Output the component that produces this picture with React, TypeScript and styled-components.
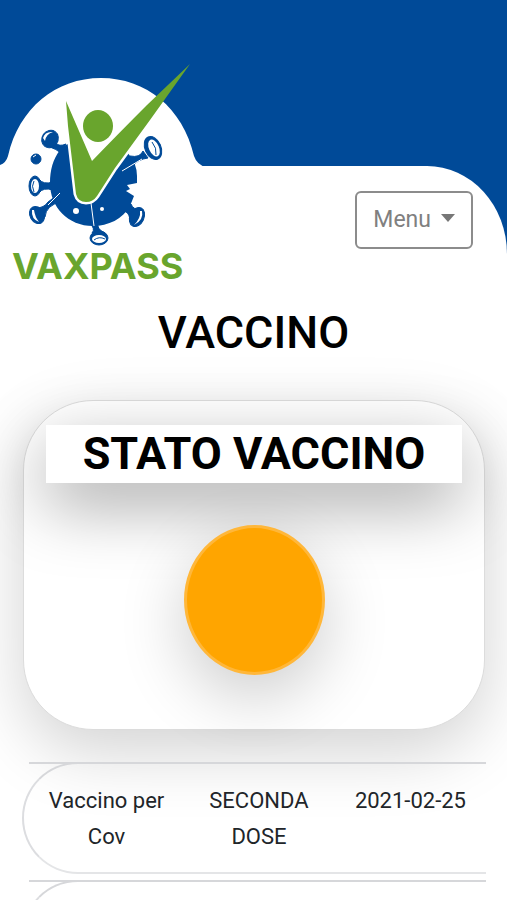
import React from "react";
import styled, { createGlobalStyle } from "styled-components";

const BLUE = "#004a98";
const GREEN = "#69a52d";

const GlobalStyle = createGlobalStyle`
  *, *::before, *::after { box-sizing: border-box; }
  body {
    margin: 0;
    background: #fff;
    color: #212529;
    font-family: Roboto, "Liberation Sans", sans-serif;
  }
`;

const Page = styled.div`
  overflow-x: hidden;
  background: #fff;
`;

const Banner = styled.div`
  padding-top: 166px;
  background: ${BLUE};
`;

const TopBar = styled.header`
  display: flex;
  justify-content: space-between;
  align-items: flex-start;
  height: 136px;
  padding-right: 34px;
  background: #fff;
  border-top-right-radius: 80px 88px;
`;

const LogoLink = styled.a`
  display: flex;
  flex-direction: column;
  width: 206px;
  margin-top: -116px;
  text-decoration: none;
`;

const Wordmark = styled.span`
  padding-left: 12px;
  color: ${GREEN};
  font: 700 36px/36px Inter, "Open Sans", sans-serif;
`;

const MenuButton = styled.button`
  display: flex;
  align-items: center;
  gap: 10px;
  height: 58px;
  margin-top: 25px;
  padding: 0 16px;
  border: 2px solid #8c8c8c;
  border-radius: 6px;
  background: transparent;
  color: #808080;
  font: 400 23px/36px Roboto, sans-serif;
`;

const Caret = styled.span`
  margin-bottom: 4px;
  border: 7px solid transparent;
  border-top: 8px solid #777;
  border-bottom: 0;
`;

const Title = styled.h1`
  margin: 0;
  padding-top: 3px;
  color: #000;
  font-size: 45px;
  font-weight: 500;
  line-height: 56px;
  text-align: center;
`;

const Card = styled.section`
  display: flex;
  flex-direction: column;
  align-items: center;
  gap: 42px;
  margin: 39px 22px 0 23px;
  padding: 24px 22px 54px;
  border: 1px solid #dcdcdc;
  border-radius: 70px;
  background: #fff;
  box-shadow: 0 22px 67px rgba(0, 0, 0, 0.175);
`;

const CardTitle = styled.h2`
  align-self: stretch;
  margin: 0;
  background: #fff;
  color: #000;
  font-size: 45px;
  font-weight: 700;
  line-height: 58px;
  text-align: center;
  white-space: nowrap;
  box-shadow: 0 22px 67px rgba(0, 0, 0, 0.35);
`;

const StatusLight = styled.div`
  width: 141px;
  height: 150px;
  border: 3px solid #ffb73a;
  border-radius: 50%;
  background: #ffa500;
  box-shadow: 0 22px 67px rgba(0, 0, 0, 0.2);
`;

const Doses = styled.table`
  width: calc(100% - 43px);
  margin: 26px 21px 0 22px;
  border-spacing: 0 6px;
  table-layout: fixed;
  font-size: 22px;
  line-height: 36px;
  text-align: center;
`;

const Col = styled.col<{ $share: number }>`
  width: ${(p) => p.$share}%;
`;

const Cell = styled.td`
  position: relative;
  height: 112px;
  padding: 19px 16px 17px 12px;
  border-top: 2px solid #d6d7da;
  border-bottom: 2px solid #e4e5e7;
  vertical-align: top;

  &:first-child {
    padding-left: 16px;
    border-left: 2px solid #dcdde0;
    border-radius: 60px 0 0 60px;
  }

  &:first-child::before {
    content: "";
    position: absolute;
    top: -2px;
    left: 5px;
    right: 0;
    height: 2px;
    background: #d6d7da;
  }

  &:last-child {
    padding-left: 6px;
    padding-right: 4px;
  }
`;

const Logo = () => (
  <svg width="206" height="198" viewBox="0 50 206 198" aria-hidden="true">
    <path
      d="M0 248V165Q6 163 8 156C19 108 56 78 101 78S183 108 194 156Q197 165 206 167V248Z"
      fill="#fff"
    />
    <g fill={BLUE} stroke={BLUE}>
      <path
        stroke="none"
        d="M60 150L64 146L68 144C85 134 112 137 127 152Q137 163 137 176L137 183L127 185L130 189L126 191L134 196L130 206C123 219 108 226 93 226C68 226 50 207 50 183C50 170 53 159 60 150Z"
      />
      <path d="M56 143Q59 147 66 144L61 153Q56 149 50 147Z" />
      <path d="M143 151Q140 158 130 156L124 164L130 168Q138 159 148 158Z" />
      <path d="M39 179Q43 185 53 182V190Q43 187 39 193Z" />
      <path d="M36 208Q44 208 48 202L56 196L61 202Q46 205 45 217Z" />
      <path d="M89 222H98Q96 229 105 233H92Q96 229 89 222Z" />
      <path d="M123 212Q128 210 130 219L142 210Q133 210 131 204Z" />
      <ellipse cx="50" cy="139" rx="8" ry="9" transform="rotate(35 50 139)" />
      <ellipse cx="153" cy="148" rx="8" ry="12" transform="rotate(-24 153 148)" />
      <ellipse cx="35" cy="186" rx="6" ry="10" />
      <ellipse cx="37" cy="215" rx="7" ry="9" transform="rotate(-30 37 215)" />
      <ellipse cx="99" cy="238" rx="9" ry="7" />
      <ellipse cx="137" cy="217" rx="7" ry="10" transform="rotate(25 137 217)" />
      <circle cx="36" cy="159" r="5" />
    </g>
    <g fill="#fff">
      <ellipse cx="154" cy="148" rx="5" ry="9" transform="rotate(-24 154 148)" />
      <ellipse cx="35" cy="186" rx="4" ry="7" />
      <ellipse cx="99" cy="239" rx="7" ry="4" />
      <circle cx="76" cy="211" r="3" />
      <circle cx="102" cy="209" r="2" />
      <path d="M43 138Q45 131 53 132Q46 134 45 141Z" />
      <path d="M32 210Q31 219 39 222Q35 217 34 210Z" />
      <path d="M142 211Q144 220 134 225Q141 218 140 211Z" />
    </g>
    <g fill="none" stroke="#fff" strokeWidth="1">
      <path d="M122 171L142 159M60 193L48 205M91 203L94 226M33 157L36 155" />
    </g>
    <g fill="none" stroke={BLUE} strokeWidth="1">
      <path d="M152 142Q157 148 156 155M34 181Q31 186 34 192M94 240Q99 236 105 239" />
    </g>
    <clipPath id="belowHead">
      <path d="M0 248V120H206V248Z" />
    </clipPath>
    <path
      d="M66 101L92 161Q118 134 147 105L190 64L150 120L115 168L97 196Q93 202 86 202Q78 202 76 194L68 126Z"
      fill="#fff"
      stroke="#fff"
      strokeWidth="5"
      strokeLinejoin="round"
      clipPath="url(#belowHead)"
    />
    <path d="M70 120L92 161L130 122Z" fill="#fff" />
    <path
      d="M66 101L92 161Q118 134 147 105L190 64L150 120L115 168L97 196Q93 202 86 202Q78 202 76 194L68 126Z"
      fill={GREEN}
    />
    <ellipse cx="98" cy="126" rx="15" ry="16" fill={GREEN} />
  </svg>
);

const doses = [
  { vaccine: "Vaccino per Cov", dose: "SECONDA DOSE", date: "2021-02-25" },
  { vaccine: "", dose: "", date: "" },
];

export default function App() {
  return (
    <Page>
      <GlobalStyle />
      <Banner>
        <TopBar>
          <LogoLink href="#">
            <Logo />
            <Wordmark>VAXPASS</Wordmark>
          </LogoLink>
          <MenuButton type="button" aria-haspopup="menu">
            Menu
            <Caret />
          </MenuButton>
        </TopBar>
      </Banner>
      <main>
        <Title>VACCINO</Title>
        <Card>
          <CardTitle>STATO VACCINO</CardTitle>
          <StatusLight />
        </Card>
        <Doses>
          <colgroup>
            <Col $share={36} />
            <Col $share={31} />
            <Col $share={33} />
          </colgroup>
          <tbody>
            {doses.map((d, i) => (
              <tr key={i}>
                <Cell>{d.vaccine}</Cell>
                <Cell>{d.dose}</Cell>
                <Cell>{d.date}</Cell>
              </tr>
            ))}
          </tbody>
        </Doses>
      </main>
    </Page>
  );
}
